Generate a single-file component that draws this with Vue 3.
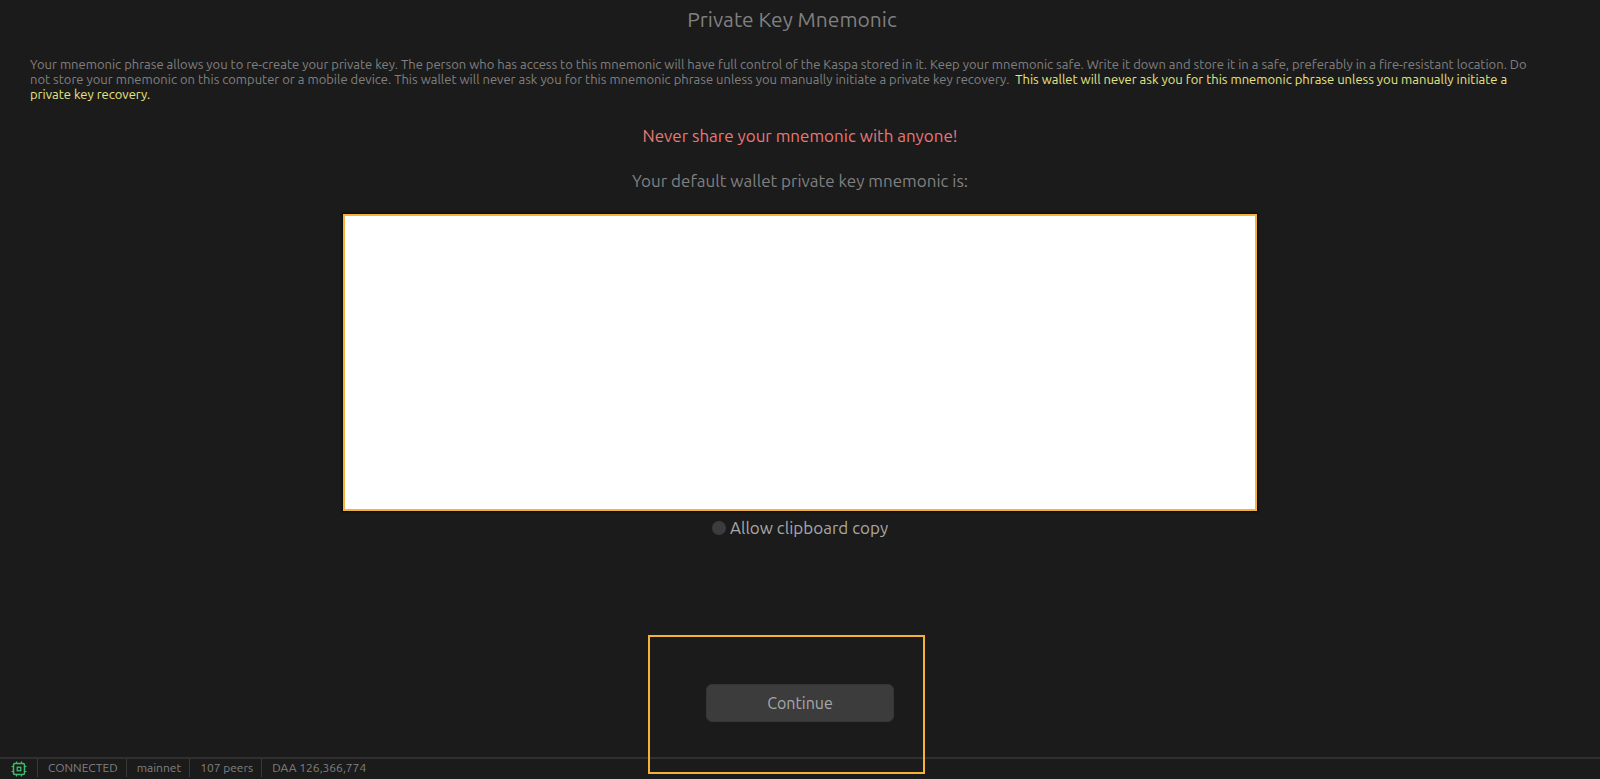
<script setup>
import { ref } from 'vue'

const allowCopy = ref(false)
const statusItems = ['CONNECTED', 'mainnet', '107 peers', 'DAA 126,366,774']
</script>

<template>
  <div class="wallet">
    <main class="content">
      <h1 class="title">Private Key Mnemonic</h1>
      <p class="notice">
        Your mnemonic phrase allows you to re-create your private key. The person who has access to this mnemonic will have full control of the Kaspa stored in it. Keep your mnemonic safe. Write it down and store it in a safe, preferably in a fire-resistant location. Do not store your mnemonic on this computer or a mobile device. This wallet will never ask you for this mnemonic phrase unless you manually initiate a private key recovery.&nbsp;
        <span class="notice-strong">This wallet will never ask you for this mnemonic phrase unless you manually initiate a private key recovery.</span>
      </p>
      <p class="warning">Never share your mnemonic with anyone!</p>
      <label class="prompt" for="mnemonic">Your default wallet private key mnemonic is:</label>
      <textarea id="mnemonic" class="mnemonic" readonly></textarea>
      <label class="copy">
        <input v-model="allowCopy" class="copy-toggle" type="checkbox" />
        <span>Allow clipboard copy</span>
      </label>
      <div class="action">
        <button class="continue" type="button">Continue</button>
        <div class="highlight"></div>
      </div>
    </main>
    <footer class="status">
      <svg class="chip" viewBox="0 0 16 16" fill="none" stroke="currentColor" aria-hidden="true">
        <rect x="2.5" y="2.5" width="11" height="11" rx="1.5" stroke-width="1.5" />
        <rect x="6.25" y="6.25" width="3.5" height="3.5" stroke-width="1.3" />
        <path d="M5.5 0.5V2.5M10.5 0.5V2.5M5.5 13.5V15.5M10.5 13.5V15.5M0.5 5.5H2.5M0.5 10.5H2.5M13.5 5.5H15.5M13.5 10.5H15.5" stroke-width="1.2" />
      </svg>
      <span v-for="item in statusItems" :key="item" class="status-item">{{ item }}</span>
    </footer>
  </div>
</template>

<style>
body {
  margin: 0;
  background: #1b1b1b;
}
</style>

<style scoped>
.wallet {
  display: flex;
  flex-direction: column;
  min-height: 100vh;
  box-sizing: border-box;
  background: #1b1b1b;
  color: #808080;
  font-family: Ubuntu, "Noto Sans", sans-serif;
}

.content {
  flex: 1;
  display: flex;
  flex-direction: column;
  align-items: center;
}

.title {
  margin: 5px 16px 0 0;
  font-size: 21px;
  line-height: 28px;
  font-weight: 400;
}

.notice {
  align-self: stretch;
  margin: 24px 60px 0 30px;
  font-size: 13px;
  line-height: 15px;
}

.notice-strong {
  color: #e6e682;
}

.warning {
  margin: 24px 0 0;
  color: #e87878;
  font-size: 17px;
  line-height: 20px;
}

.prompt {
  margin-top: 25px;
  font-size: 17px;
  line-height: 20px;
}

.mnemonic {
  box-sizing: border-box;
  width: 57.1%;
  height: 297px;
  margin-top: 23px;
  padding: 12px;
  border: 2px solid #f5b13a;
  outline: 0;
  resize: none;
  background: #fff;
  color: #1b1b1b;
  font: inherit;
  box-shadow: 0 0 2px 1px #0b0b0b;
}

.copy {
  display: flex;
  align-items: center;
  gap: 4px;
  margin-top: 7px;
  color: #a8a8a8;
  font-size: 17px;
  line-height: 20px;
}

.copy-toggle {
  appearance: none;
  width: 14px;
  height: 14px;
  margin: 0;
  border-radius: 50%;
  background: #3c3c3c;
}

.copy-toggle:checked {
  background: #a8a8a8;
}

.action {
  position: relative;
  margin: auto 0 35px;
}

.continue {
  display: block;
  width: 188px;
  height: 38px;
  padding: 0;
  border: 1px solid #363636;
  border-radius: 6px;
  background: #3c3c3c;
  color: #a8a8a8;
  font: inherit;
  font-size: 16px;
}

.highlight {
  position: absolute;
  top: -49px;
  right: -31px;
  bottom: -52px;
  left: -58px;
  border: 2px solid #f5b13a;
  pointer-events: none;
}

.status {
  display: flex;
  align-items: stretch;
  height: 20px;
  border-top: 2px solid #2f2f2f;
  font-size: 12px;
  line-height: 18px;
}

.chip {
  width: 16px;
  height: 16px;
  margin: 2px 10px 0 11px;
  color: #3fbd6c;
}

.status-item {
  height: 18px;
  padding: 0 8px 0 10px;
  border-left: 1px solid #3a3a3a;
}
</style>
